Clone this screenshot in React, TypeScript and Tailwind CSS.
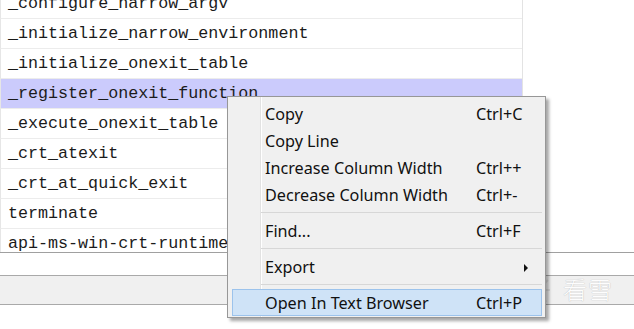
import React from "react";

const rows = [
  "_configure_narrow_argv",
  "_initialize_narrow_environment",
  "_initialize_onexit_table",
  "_register_onexit_function",
  "_execute_onexit_table",
  "_crt_atexit",
  "_crt_at_quick_exit",
  "terminate",
  "api-ms-win-crt-runtime-l1-1-0.dll",
];

type Item =
  | { kind: "item"; label: string; shortcut?: string; arrow?: boolean; active?: boolean }
  | { kind: "sep" };

const menu: Item[] = [
  { kind: "item", label: "Copy", shortcut: "Ctrl+C" },
  { kind: "item", label: "Copy Line" },
  { kind: "item", label: "Increase Column Width", shortcut: "Ctrl++" },
  { kind: "item", label: "Decrease Column Width", shortcut: "Ctrl+-" },
  { kind: "sep" },
  { kind: "item", label: "Find...", shortcut: "Ctrl+F" },
  { kind: "sep" },
  { kind: "item", label: "Export", arrow: true },
  { kind: "sep" },
  { kind: "item", label: "Open In Text Browser", shortcut: "Ctrl+P", active: true },
];

export default function App() {
  return (
    <div className="relative w-[634px] h-[329px] overflow-hidden bg-white">
      {/* table area */}
      <div className="h-[252px] overflow-hidden">
        <div className="mt-[-11px] w-[523px] border-r border-[#e3e3e3] overflow-hidden">
          {rows.map((r, i) => (
            <div
              key={i}
              className={`h-[30px] flex items-center border-b border-[#ececec] border-l border-l-[#e6e6e6] pl-[7px] whitespace-nowrap text-[16.7px] text-[#1b1b1b] ${
                i === 3 ? "bg-[#cbcbfc]" : ""
              }`}
              style={{ fontFamily: '"Liberation Mono", monospace' }}
            >
              {r}
            </div>
          ))}
        </div>
      </div>
      {/* bottom bars */}
      <div className="border-t border-[#a0a0a0] h-[23px] bg-white" />
      <div className="border-t border-[#a9a9a9] h-[29px] bg-[#f0f0f0]" />
      <div className="border-t border-[#a9a9a9] h-[25px] bg-white" />

      {/* watermark */}
      <div className="absolute left-[527px] top-[272px] flex items-center gap-[12px] pointer-events-none">
        <svg width="24" height="33" viewBox="0 0 24 33" fill="none" stroke="#dcdcdc" strokeWidth="2">
          <path d="M5 4 L9 10 M15 2 L13 10 M21 8 L16 13 M2 16 L9 17 M23 18 L16 18 M5 28 L10 22 M19 30 L15 22 M12 32 L12 22" />
          <circle cx="12" cy="17" r="4" />
        </svg>
        <span
          className="text-[24px] leading-none text-[#fdfdfd] tracking-[1px]"
          style={{ fontFamily: '"Noto Sans CJK SC", sans-serif', fontWeight: 300, textShadow: "0 0 1px #bdbdbd, 0 0 1px #cfcfcf" }}
        >
          看雪
        </span>
      </div>

      {/* context menu */}
      <div
        className="absolute left-[227px] top-[96px] w-[319px] bg-[#f0f0f0] border border-[#979797] pt-[3px] pb-[1px] shadow-[3px_3px_3px_rgba(0,0,0,0.35)]"
        style={{ fontFamily: '"Noto Sans", sans-serif' }}
      >
        <div className="absolute left-[32px] top-0 bottom-0 w-px bg-[#e2e2e2]" />
        <div className="absolute left-[33px] top-0 bottom-0 w-px bg-white" />
        {menu.map((m, i) =>
          m.kind === "sep" ? (
            <div key={i} className="relative h-[9px] flex items-center pl-[33px] pr-[3px]">
              <div className="w-full h-px bg-[#d7d7d7]" />
            </div>
          ) : (
            <div key={i} className="relative h-[27px] pl-[4px] pr-[3px]">
              <div
                className={`h-full flex items-center border pt-[2px] ${
                  m.active ? "bg-[#cfe3f7] border-[#9cc3ec]" : "border-transparent"
                }`}
              >
                <span className="ml-[32px] w-[211px] text-[16.2px] text-[#111] whitespace-nowrap">{m.label}</span>
                <span className="text-[16.2px] text-[#111] whitespace-nowrap">{m.shortcut ?? ""}</span>
                {m.arrow && (
                  <svg className="ml-auto mr-[12px]" width="5" height="8" viewBox="0 0 5 8">
                    <path d="M0 0 L4 4 L0 8 Z" fill="#111" />
                  </svg>
                )}
              </div>
            </div>
          )
        )}
      </div>
    </div>
  );
}
